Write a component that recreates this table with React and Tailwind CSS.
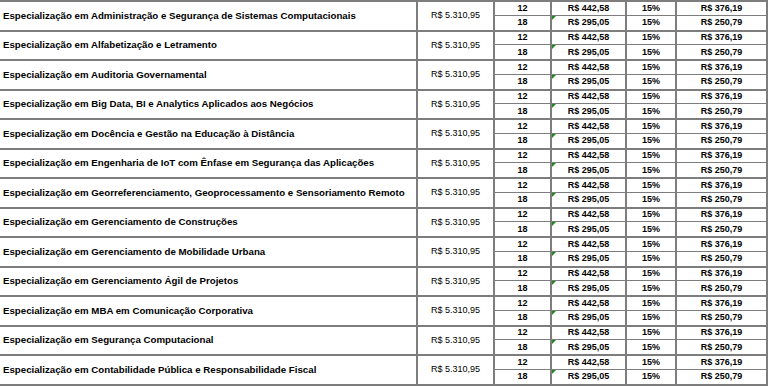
import React from 'react';

const cursos = [
  'Especialização em Administração e Segurança de Sistemas Computacionais',
  'Especialização em Alfabetização e Letramento',
  'Especialização em Auditoria Governamental',
  'Especialização em Big Data, BI e Analytics Aplicados aos Negócios',
  'Especialização em Docência e Gestão na Educação à Distância',
  'Especialização em Engenharia de IoT com Ênfase em Segurança das Aplicações',
  'Especialização em Georreferenciamento, Geoprocessamento e Sensoriamento Remoto',
  'Especialização em Gerenciamento de Construções',
  'Especialização em Gerenciamento de Mobilidade Urbana',
  'Especialização em Gerenciamento Ágil de Projetos',
  'Especialização em MBA em Comunicação Corporativa',
  'Especialização em Segurança Computacional',
  'Especialização em Contabilidade Pública e Responsabilidade Fiscal',
];

const parcelas = [
  { n: '12', valor: 'R$ 442,58', desc: '15%', final: 'R$ 376,19' },
  { n: '18', valor: 'R$ 295,05', desc: '15%', final: 'R$ 250,79', flag: true },
];

function SubRow({ p, last }) {
  return (
    <div className={`flex h-1/2 ${last ? '' : 'border-b border-[#7d7d7d]'}`}>
      <div className="w-[57px] flex items-center justify-center border-r-2 border-[#7d7d7d] font-bold">{p.n}</div>
      <div className="relative w-[75px] flex items-center justify-center border-r-2 border-[#7d7d7d] font-bold">
        {p.flag && (
          <span className="absolute top-0 left-0 w-0 h-0 border-t-[4px] border-r-[4px] border-t-[#1e8a1e] border-r-transparent" />
        )}
        {p.valor}
      </div>
      <div className="w-[50px] flex items-center justify-center border-r-2 border-[#7d7d7d] font-bold">{p.desc}</div>
      <div className="w-[89px] flex items-center justify-center font-bold">{p.final}</div>
    </div>
  );
}

export default function App() {
  return (
    <div className="w-[768px] h-[387px] bg-white overflow-hidden text-black text-[9px] leading-none" style={{ fontFamily: '"Liberation Sans", Arial, sans-serif' }}>
      <div className="border-t-2 border-r-2 border-[#7d7d7d]">
        {cursos.map((c) => (
          <div key={c} className="flex h-[29.5px] border-b-2 border-[#7d7d7d]">
            <div className="w-[418px] flex items-center pl-[3px] border-r-2 border-[#7d7d7d] font-bold text-[9.7px] whitespace-nowrap">{c}</div>
            <div className="w-[77px] flex items-center justify-center border-r-2 border-[#7d7d7d]">R$ 5.310,95</div>
            <div className="flex-1 flex flex-col">
              {parcelas.map((p, i) => (
                <SubRow key={p.n} p={p} last={i === 1} />
              ))}
            </div>
          </div>
        ))}
      </div>
    </div>
  );
}
